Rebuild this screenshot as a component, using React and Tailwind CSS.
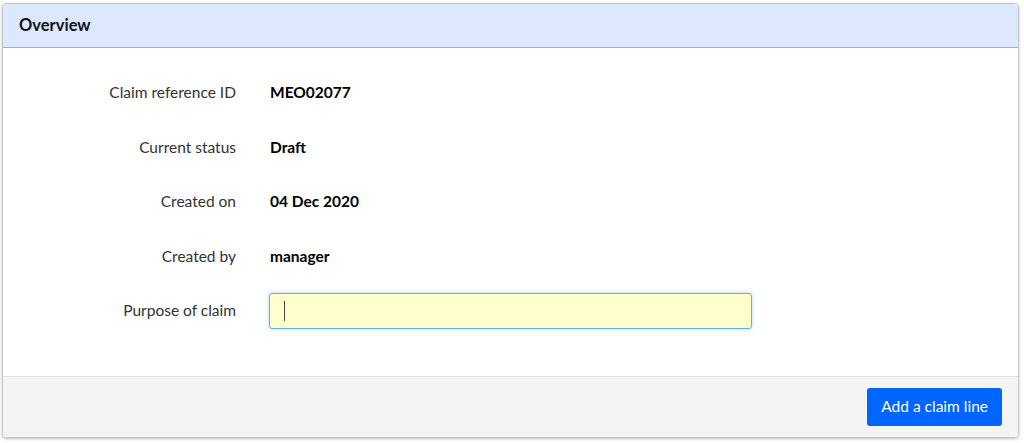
import React from 'react';

const rows = [
  { label: 'Claim reference ID', value: 'MEO02077' },
  { label: 'Current status', value: 'Draft' },
  { label: 'Created on', value: '04 Dec 2020' },
  { label: 'Created by', value: 'manager' },
];

export default function App() {
  return (
    <div className="w-[1024px] h-[443px] bg-white pt-[3px] pl-[2px] font-['Lato','Noto_Sans',sans-serif]">
      <div className="w-[1017px] h-[435px] flex flex-col border border-[#c6c6c6] rounded-[4px] shadow-[0_1px_3px_rgba(0,0,0,0.25)] overflow-hidden">
        {/* Header */}
        <div className="h-[44px] shrink-0 flex items-center px-4 bg-[#dce8fd] border-b border-[#a8adb5]">
          <h2 className="text-[16.5px] font-bold text-[#111]">Overview</h2>
        </div>

        {/* Body */}
        <div className="flex-1 bg-white pt-[27px] flex flex-col gap-[18.5px]">
          {rows.map((r) => (
            <div key={r.label} className="h-9 flex items-center gap-[34px]">
              <div className="w-[233px] text-right text-[15.5px] text-[#333]">{r.label}</div>
              <div className="text-[15.5px] font-bold text-black">{r.value}</div>
            </div>
          ))}
          <div className="h-9 flex items-center gap-[33px]">
            <div className="w-[233px] text-right text-[15.5px] text-[#333]">Purpose of claim</div>
            <div className="w-[483px] h-9 flex items-center px-[14px] bg-[#ffffcc] border border-[#56b6ec] rounded-[3px] shadow-[0_0_4px_rgba(86,170,240,0.45)]">
              <span className="w-px h-5 bg-[#444]" />
            </div>
          </div>
        </div>

        {/* Footer */}
        <div className="h-[61px] shrink-0 flex items-center justify-end pr-[16px] bg-[#f4f4f4] border-t border-[#e2e2e2]">
          <button className="h-[38px] px-[14px] rounded-[3px] bg-[#0066ff] text-white text-[15.5px]">
            Add a claim line
          </button>
        </div>
      </div>
    </div>
  );
}
